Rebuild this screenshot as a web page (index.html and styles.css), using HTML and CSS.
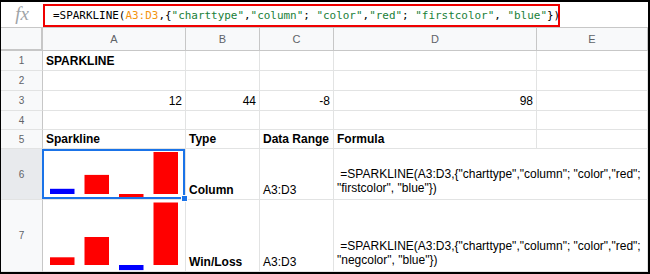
FILE: index.html
```html
<!DOCTYPE html>
<html lang="en">
<head>
    <meta charset="UTF-8">
    <meta name="viewport" content="width=device-width, initial-scale=1.0">
    <link rel="stylesheet" href="styles.css">
</head>

<body>
    <div class="sheet">
        <div class="formula-bar">
            <div class="fx">fx</div>
            <div class="formula-input">=SPARKLINE(<span class="ref">A3:D3</span>,{<span class="str">"charttype"</span>,<span class="str">"column"</span>; <span class="str">"color"</span>,<span class="str">"red"</span>; <span class="str">"firstcolor"</span>, <span class="str">"blue"</span>})</div>
        </div>

        <div class="grid">
            <div class="corner"></div>
            <div class="col-head">A</div>
            <div class="col-head">B</div>
            <div class="col-head">C</div>
            <div class="col-head">D</div>
            <div class="col-head">E</div>

            <div class="row-head">1</div>
            <div class="cell bold">SPARKLINE</div>
            <div class="cell"></div>
            <div class="cell"></div>
            <div class="cell"></div>
            <div class="cell"></div>

            <div class="row-head">2</div>
            <div class="cell"></div>
            <div class="cell"></div>
            <div class="cell"></div>
            <div class="cell"></div>
            <div class="cell"></div>

            <div class="row-head">3</div>
            <div class="cell num">12</div>
            <div class="cell num">44</div>
            <div class="cell num">-8</div>
            <div class="cell num">98</div>
            <div class="cell"></div>

            <div class="row-head">4</div>
            <div class="cell"></div>
            <div class="cell"></div>
            <div class="cell"></div>
            <div class="cell"></div>
            <div class="cell"></div>

            <div class="row-head">5</div>
            <div class="cell bold">Sparkline</div>
            <div class="cell bold">Type</div>
            <div class="cell bold">Data Range</div>
            <div class="cell bold">Formula</div>
            <div class="cell"></div>

            <div class="row-head selected">6</div>
            <div class="cell chart active">
                <svg viewBox="0 0 142 50" width="142" height="50">
                    <rect x="7" y="39.8" width="24.5" height="5.2" fill="#0000ff"/>
                    <rect x="41.5" y="25.9" width="24.5" height="19.1" fill="#ff0000"/>
                    <rect x="76" y="45" width="24.5" height="3.5" fill="#ff0000"/>
                    <rect x="110.5" y="3" width="24.5" height="42" fill="#ff0000"/>
                </svg>
            </div>
            <div class="cell bold">Column</div>
            <div class="cell">A3:D3</div>
            <div class="cell wide">&nbsp;=SPARKLINE(A3:D3,{"charttype","column"; "color","red";<br>"firstcolor", "blue"})</div>

            <div class="row-head">7</div>
            <div class="cell chart">
                <svg viewBox="0 0 142 71" width="142" height="71">
                    <rect x="7" y="57.3" width="24.5" height="7.7" fill="#ff0000"/>
                    <rect x="41.5" y="37" width="24.5" height="28" fill="#ff0000"/>
                    <rect x="76" y="65" width="24.5" height="5.1" fill="#0000ff"/>
                    <rect x="110.5" y="2.5" width="24.5" height="62.5" fill="#ff0000"/>
                </svg>
            </div>
            <div class="cell bold">Win/Loss</div>
            <div class="cell">A3:D3</div>
            <div class="cell wide">&nbsp;=SPARKLINE(A3:D3,{"charttype","column"; "color","red";<br>"negcolor", "blue"})</div>
        </div>
    </div>
</body>

</html>
```

FILE: styles.css
```css
body {
    margin: 0;
    padding: 0;
    font-family: "Liberation Sans", Arial, sans-serif;
}

.sheet {
    width: 650px;
    height: 274px;
    box-sizing: border-box;
    border: 2px solid #000;
    border-left-width: 1px;
    background: #fff;
    overflow: hidden;
}

/* formula bar */
.formula-bar {
    display: flex;
    align-items: center;
    height: 26px;
    box-sizing: border-box;
    border-bottom: 1px solid #c7c7c7;
}

.fx {
    width: 42px;
    text-align: center;
    font-family: "Liberation Serif", serif;
    font-style: italic;
    font-size: 19px;
    color: #a0a4a8;
    margin-top: -2px;
}

.formula-input {
    width: 517px;
    height: 23px;
    box-sizing: border-box;
    border: 2px solid #f00000;
    padding: 0 0 0 8px;
    margin-top: 1px;
    font-family: "DejaVu Sans Mono", monospace;
    font-size: 10.95px;
    line-height: 19px;
    color: #000;
    white-space: nowrap;
}

.formula-input .ref {
    color: #f4940f;
}

.formula-input .str {
    color: #188038;
}

/* grid */
.grid {
    display: grid;
    grid-template-columns: 42px 143px 74px 74px 203px 1fr;
    grid-template-rows: 23px 20px 20px 20px 19px 19px 51px 72px;
}

.corner,
.col-head,
.row-head {
    background: #f8f9fa;
    border-right: 1px solid #c7c7c7;
    border-bottom: 1px solid #c7c7c7;
    color: #5f6368;
    box-sizing: border-box;
    display: flex;
    align-items: center;
    justify-content: center;
}

.corner {
    border-right: 2px solid #c7c7c7;
    border-bottom: 2px solid #c7c7c7;
}

.col-head {
    font-size: 11px;
}

.row-head {
    font-size: 10px;
    border-bottom-color: #e2e3e3;
}

.row-head.selected {
    background: #e8eaed;
}

.cell {
    display: flex;
    align-items: flex-end;
    box-sizing: border-box;
    border-right: 1px solid #e2e3e3;
    border-bottom: 1px solid #e2e3e3;
    padding: 0 3px 2px;
    font-size: 12px;
    line-height: 14px;
    color: #000;
    white-space: nowrap;
    overflow: hidden;
}

.cell.bold {
    font-weight: bold;
}

.cell.num {
    justify-content: flex-end;
}

.cell.wide {
    grid-column: span 2;
    padding-bottom: 4px;
}

.cell.chart {
    padding: 0;
    overflow: visible;
    position: relative;
}

.cell.chart svg {
    display: block;
}

.cell.active {
    z-index: 1;
}

.cell.active::after {
    content: "";
    position: absolute;
    top: 0;
    left: -1px;
    right: 0;
    bottom: 0;
    border: 2px solid #1a73e8;
}

.cell.active::before {
    content: "";
    position: absolute;
    right: -3px;
    bottom: -3px;
    width: 5px;
    height: 5px;
    background: #1a73e8;
    border: 1px solid #fff;
    z-index: 2;
}
```
